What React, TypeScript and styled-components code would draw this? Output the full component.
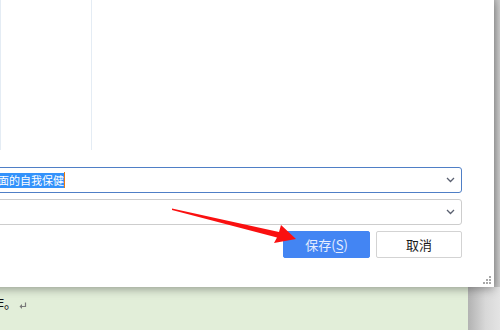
import React from "react";
import styled, { createGlobalStyle } from "styled-components";

const GlobalStyle = createGlobalStyle`
  html, body {
    margin: 0;
    padding: 0;
    background: #ffffff;
    font-family: "Noto Sans CJK SC", "Noto Sans", "Liberation Sans", sans-serif;
  }
  #root {
    width: 500px;
    height: 330px;
    overflow: hidden;
  }
`;

const Screen = styled.div`
  position: relative;
  width: 500px;
  height: 330px;
  overflow: hidden;
  display: flex;
  flex-direction: column;
`;

const TopRow = styled.div`
  display: flex;
  height: 287px;
  flex: none;
`;

const Dialog = styled.div`
  position: relative;
  z-index: 2;
  flex: none;
  width: 554px;
  margin-left: -60px;
  box-sizing: border-box;
  padding: 0 32px 0 20px;
  background: #ffffff;
  box-shadow: 0 2px 9px rgba(0, 0, 0, 0.35);
  display: flex;
  flex-direction: column;
`;

const Panel = styled.div`
  display: flex;
  height: 150px;
  flex: none;
`;

const PanelColumn = styled.div<{ $width?: number }>`
  ${(p) => (p.$width ? `width: ${p.$width}px; flex: none;` : "flex: 1;")}
  border-right: ${(p) => (p.$width ? "1px solid #e4ecf4" : "none")};
`;

const Fields = styled.div`
  margin-top: 17px;
  display: flex;
  flex-direction: column;
  gap: 6px;
`;

const Select = styled.div<{ $focused?: boolean }>`
  height: 26px;
  box-sizing: border-box;
  border: 1px solid ${(p) => (p.$focused ? "#4f7fc6" : "#cdcdcd")};
  border-radius: 3px;
  display: flex;
  align-items: center;
  padding: 0 6px 0 4px;
  background: #fff;
`;

const Value = styled.div`
  flex: 1;
  display: flex;
  align-items: center;
  white-space: nowrap;
  overflow: hidden;
  font-size: 11px;
`;

const Highlight = styled.span`
  background: #3392fb;
  color: #ffffff;
  line-height: 15px;
`;

const Caret = styled.span`
  display: inline-block;
  width: 1px;
  height: 16px;
  background: #e87a10;
`;

const Chevron = styled.svg`
  flex: none;
  width: 9px;
  height: 6px;
`;

const ButtonRow = styled.div`
  display: flex;
  justify-content: flex-end;
  gap: 6px;
  margin-top: 6px;
`;

const Button = styled.button<{ $primary?: boolean }>`
  height: 27px;
  width: ${(p) => (p.$primary ? "87px" : "86px")};
  box-sizing: border-box;
  border-radius: 2px;
  border: 1px solid ${(p) => (p.$primary ? "#4385f3" : "#d3d3d3")};
  background: ${(p) => (p.$primary ? "#4385f3" : "#ffffff")};
  color: ${(p) => (p.$primary ? "#e4edff" : "#1a1a1a")};
  font-family: "Noto Sans CJK SC", "Noto Sans", sans-serif;
  font-size: 13px;
  padding: 0;
  cursor: pointer;

  u {
    text-underline-offset: 2px;
  }
`;

const Grip = styled.svg`
  position: absolute;
  right: 3px;
  bottom: 3px;
  width: 8px;
  height: 8px;
`;

const SideStrip = styled.div`
  flex: 1;
  background: linear-gradient(90deg, #b6b6b6, #cccccc);
`;

const BottomRow = styled.div`
  flex: 1;
  display: flex;
`;

const Document = styled.div`
  width: 468px;
  flex: none;
  background: #e2eed9;
  box-sizing: border-box;
  padding-top: 8px;
  display: flex;
  align-items: flex-start;
  overflow: hidden;
`;

const DocLine = styled.div`
  margin-left: -22px;
  font-size: 13px;
  line-height: 16px;
  color: #111;
  display: flex;
  align-items: center;
`;

const ReturnMark = styled.svg`
  width: 8px;
  height: 8px;
  margin-left: 2px;
  margin-top: 5px;
`;

const Margin = styled.div`
  flex: 1;
  background: linear-gradient(90deg, #b2b2b2, #d8d8d8 55%, #e4e4e4);
`;

const Annotation = styled.svg`
  position: absolute;
  left: 0;
  top: 0;
  width: 500px;
  height: 330px;
  pointer-events: none;
  z-index: 5;
`;

const ChevronIcon = () => (
  <Chevron viewBox="0 0 9 6">
    <polyline points="1,1 4.5,4.5 8,1" fill="none" stroke="#5a6070" strokeWidth="1.3" />
  </Chevron>
);

export default function App() {
  return (
    <>
      <GlobalStyle />
      <Screen>
        <TopRow>
          <Dialog>
            <Panel>
              <PanelColumn $width={40} />
              <PanelColumn $width={90} />
              <PanelColumn />
            </Panel>
            <Fields>
              <Select $focused>
                <Value>
                  <Highlight>女性颜面的自我保健</Highlight>
                  <Caret />
                </Value>
                <ChevronIcon />
              </Select>
              <Select>
                <Value />
                <ChevronIcon />
              </Select>
            </Fields>
            <ButtonRow>
              <Button $primary>
                保存(<u>S</u>)
              </Button>
              <Button>取消</Button>
            </ButtonRow>
            <Grip viewBox="0 0 8 8">
              {[
                [6, 0],
                [3, 3],
                [6, 3],
                [0, 6],
                [3, 6],
                [6, 6],
              ].map(([x, y]) => (
                <rect key={`${x}-${y}`} x={x} y={y} width="2" height="2" fill="#a8a8a8" />
              ))}
            </Grip>
          </Dialog>
          <SideStrip />
        </TopRow>
        <BottomRow>
          <Document>
            <DocLine>
              工作。
              <ReturnMark viewBox="0 0 8 8">
                <path d="M6.5 0.5 V4.5 H1.5" fill="none" stroke="#7a7a7a" strokeWidth="1.2" />
                <path d="M0.5 4.5 L3 2 V7 Z" fill="#7a7a7a" />
              </ReturnMark>
            </DocLine>
          </Document>
          <Margin />
        </BottomRow>
        <Annotation viewBox="0 0 500 330">
          <polygon
            points="172,208.4 279,232 281,225 296,239 274,243 277,237.5 172,210"
            fill="#fa1010"
          />
        </Annotation>
      </Screen>
    </>
  );
}
